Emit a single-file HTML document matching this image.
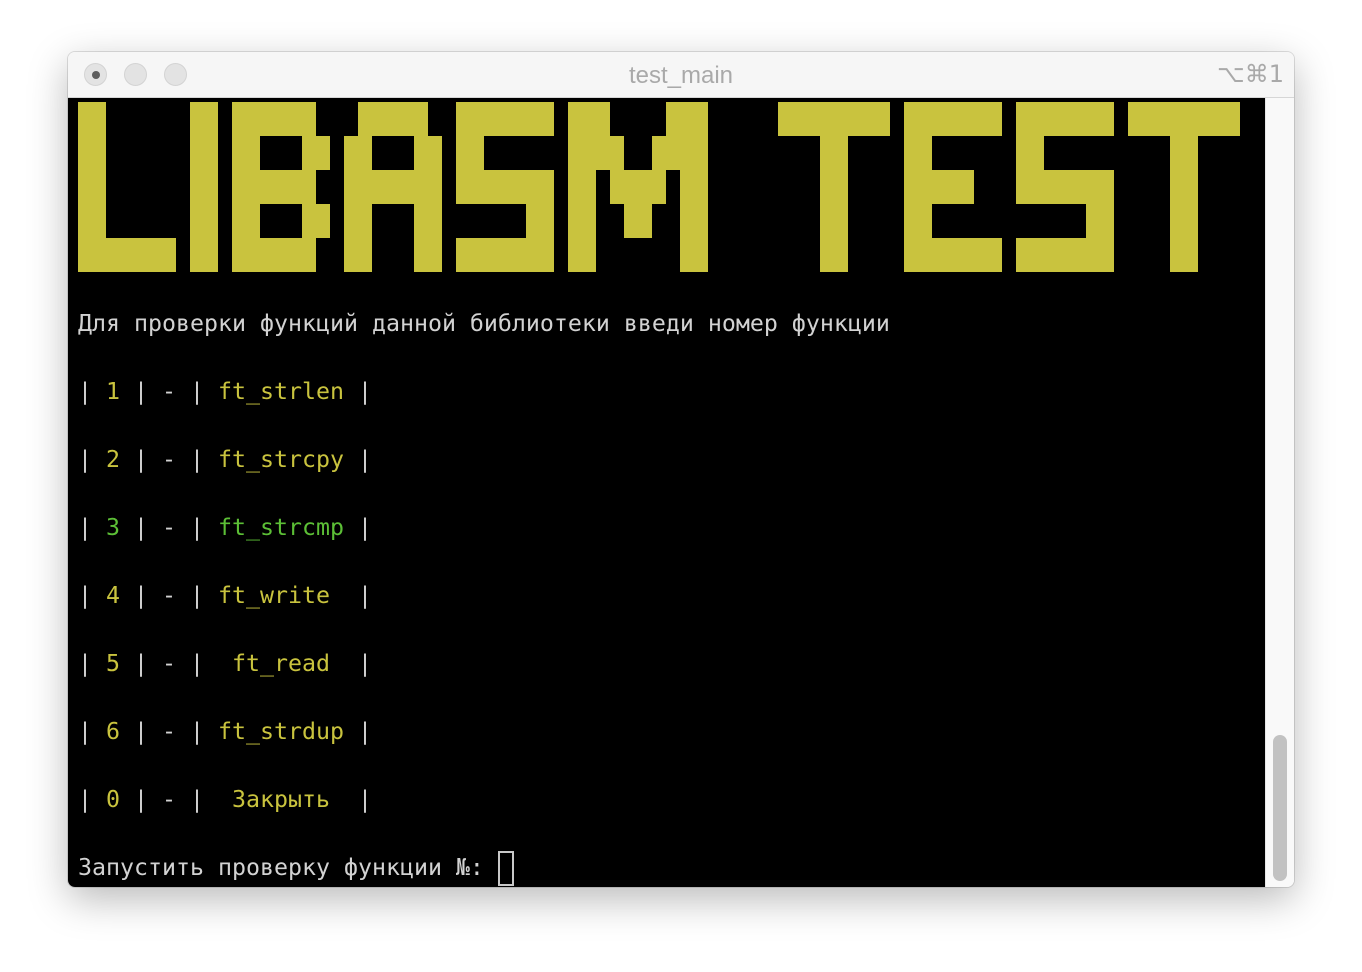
<!DOCTYPE html>
<html><head><meta charset="utf-8"><style>
html,body{margin:0;padding:0;background:#fff;width:1362px;height:972px;overflow:hidden;}
.win{position:absolute;left:68px;top:52px;width:1226px;height:835px;border-radius:7px;background:#f6f6f6;box-shadow:0 12px 40px rgba(0,0,0,0.28),0 0 0 1px rgba(0,0,0,0.12);overflow:hidden;}
.tb{position:absolute;left:0;top:0;width:1226px;height:45px;background:#f6f6f6;border-bottom:1px solid #d6d6d6;}
.dot{position:absolute;top:11px;width:23px;height:23px;border-radius:50%;background:#e3e3e3;border:1px solid #d3d3d3;box-sizing:border-box;}
.title{position:absolute;left:0;width:1226px;top:10px;text-align:center;font:24px "Liberation Sans","DejaVu Sans",sans-serif;color:#a9a9a9;}
.kb{position:absolute;right:10px;top:8px;font:24px "DejaVu Sans",sans-serif;color:#a9a9a9;}
.term{position:absolute;left:0;top:46px;width:1197px;height:789px;background:#000;}
.sb{position:absolute;left:1197px;top:46px;width:29px;height:789px;background:#f9f9f9;border-left:1px solid #e6e6e6;}
.thumb{position:absolute;left:1205px;top:683px;width:14px;height:146px;border-radius:7px;background:#c2c2c2;}
.b{position:absolute;background:#c9c33e;height:34px;}
.t{position:absolute;left:78px;font-family:"DejaVu Sans Mono","Liberation Mono",monospace;font-size:23.25px;line-height:34px;height:34px;white-space:pre;color:#d2d2d2;}
.y{color:#c9c33e}.g{color:#5cbf36}
.cur{position:absolute;left:498px;top:851px;width:12px;height:31px;border:2px solid #c8c8c8;}
</style></head><body>
<div class="win">
<div class="tb">
<div class="dot" style="left:16px"><div style="position:absolute;left:7px;top:7px;width:8px;height:8px;border-radius:50%;background:#5e5e5e"></div></div>
<div class="dot" style="left:56px"></div>
<div class="dot" style="left:96px"></div>
<div class="title">test_main</div>
<div class="kb">⌥⌘1</div>
</div>
<div class="term"></div>
<div class="sb"></div>
<div class="thumb"></div>
</div>
<!-- L -->
<div class="b" style="left:78px;top:102px;width:28px;height:170px"></div>
<div class="b" style="left:78px;top:238px;width:98px"></div>
<!-- I -->
<div class="b" style="left:190px;top:102px;width:28px;height:170px"></div>
<!-- B -->
<div class="b" style="left:232px;top:102px;width:28px;height:170px"></div>
<div class="b" style="left:232px;top:102px;width:84px"></div>
<div class="b" style="left:302px;top:136px;width:28px"></div>
<div class="b" style="left:232px;top:170px;width:84px"></div>
<div class="b" style="left:302px;top:204px;width:28px"></div>
<div class="b" style="left:232px;top:238px;width:84px"></div>
<!-- A -->
<div class="b" style="left:358px;top:102px;width:70px"></div>
<div class="b" style="left:344px;top:136px;width:28px;height:136px"></div>
<div class="b" style="left:414px;top:136px;width:28px;height:136px"></div>
<div class="b" style="left:344px;top:170px;width:98px"></div>
<!-- S -->
<div class="b" style="left:456px;top:102px;width:98px"></div>
<div class="b" style="left:456px;top:136px;width:28px"></div>
<div class="b" style="left:456px;top:170px;width:98px"></div>
<div class="b" style="left:526px;top:204px;width:28px"></div>
<div class="b" style="left:456px;top:238px;width:98px"></div>
<!-- M -->
<div class="b" style="left:568px;top:102px;width:28px;height:170px"></div>
<div class="b" style="left:680px;top:102px;width:28px;height:170px"></div>
<div class="b" style="left:568px;top:102px;width:42px"></div>
<div class="b" style="left:666px;top:102px;width:42px"></div>
<div class="b" style="left:568px;top:136px;width:56px"></div>
<div class="b" style="left:652px;top:136px;width:56px"></div>
<div class="b" style="left:610px;top:170px;width:56px"></div>
<div class="b" style="left:624px;top:204px;width:28px"></div>
<!-- T -->
<div class="b" style="left:778px;top:102px;width:112px"></div>
<div class="b" style="left:820px;top:102px;width:28px;height:170px"></div>
<!-- E -->
<div class="b" style="left:904px;top:102px;width:98px"></div>
<div class="b" style="left:904px;top:102px;width:28px;height:170px"></div>
<div class="b" style="left:904px;top:170px;width:70px"></div>
<div class="b" style="left:904px;top:238px;width:98px"></div>
<!-- S -->
<div class="b" style="left:1016px;top:102px;width:98px"></div>
<div class="b" style="left:1016px;top:136px;width:28px"></div>
<div class="b" style="left:1016px;top:170px;width:98px"></div>
<div class="b" style="left:1086px;top:204px;width:28px"></div>
<div class="b" style="left:1016px;top:238px;width:98px"></div>
<!-- T -->
<div class="b" style="left:1128px;top:102px;width:112px"></div>
<div class="b" style="left:1170px;top:102px;width:28px;height:170px"></div>

<div class="t" style="top:307px">Для проверки функций данной библиотеки введи номер функции</div>
<div class="t" style="top:375px">| <span class="y">1</span> | - | <span class="y">ft_strlen</span> |</div>
<div class="t" style="top:443px">| <span class="y">2</span> | - | <span class="y">ft_strcpy</span> |</div>
<div class="t" style="top:511px">| <span class="g">3</span> | - | <span class="g">ft_strcmp</span> |</div>
<div class="t" style="top:579px">| <span class="y">4</span> | - | <span class="y">ft_write</span>  |</div>
<div class="t" style="top:647px">| <span class="y">5</span> | - |  <span class="y">ft_read</span>  |</div>
<div class="t" style="top:715px">| <span class="y">6</span> | - | <span class="y">ft_strdup</span> |</div>
<div class="t" style="top:783px">| <span class="y">0</span> | - |  <span class="y">Закрыть</span>  |</div>
<div class="t" style="top:851px">Запустить проверку функции №: </div>
<div class="cur"></div>
</body></html>
